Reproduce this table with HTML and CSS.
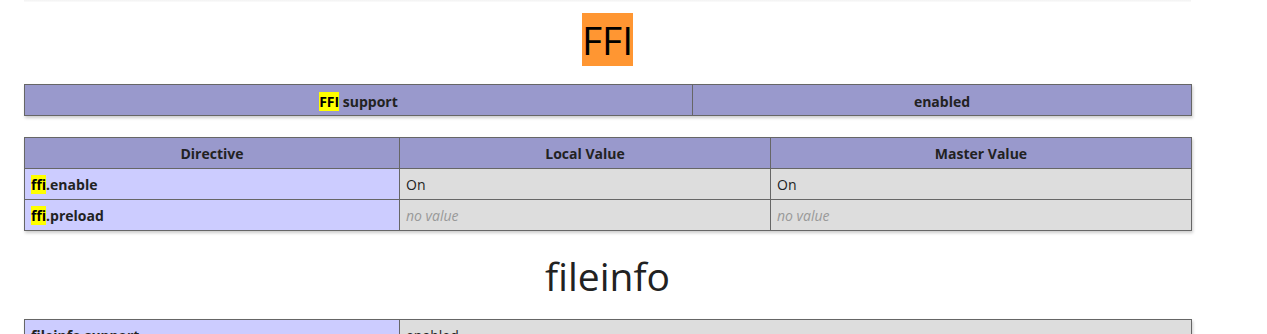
FILE: index.html
```html
<!DOCTYPE html>
<html>
<head>
<meta charset="utf-8">
<title>phpinfo()</title>
<link rel="stylesheet" href="styles.css">
</head>
<body>
<div class="center">
  <div class="prev-shadow"></div>
  <h2 class="first"><mark class="active">FFI</mark></h2>
  <table class="t1">
    <colgroup><col class="c668"><col class="c499"></colgroup>
    <tr class="h"><th><mark>FFI</mark> support</th><th>enabled</th></tr>
  </table>
  <table class="t2">
    <colgroup><col class="c375"><col class="c371"><col class="c421"></colgroup>
    <tr class="h"><th>Directive</th><th>Local Value</th><th>Master Value</th></tr>
    <tr><td class="e"><mark>ffi</mark>.enable</td><td class="v">On</td><td class="v">On</td></tr>
    <tr><td class="e"><mark>ffi</mark>.preload</td><td class="v"><i>no value</i></td><td class="v"><i>no value</i></td></tr>
  </table>
  <h2>fileinfo</h2>
  <table class="t3">
    <colgroup><col class="c375"><col class="c792"></colgroup>
    <tr><td class="e">fileinfo support </td><td class="v">enabled </td></tr>
    <tr><td class="e">libmagic </td><td class="v">540 </td></tr>
  </table>
</div>
</body>
</html>
```

FILE: styles.css
```css
html, body {
  margin: 0;
  padding: 0;
  background: #fff;
}
body {
  color: #222;
  font-family: "Open Sans", "Noto Sans", sans-serif;
}
.center {
  width: 1167px;
  margin-left: 24px;
  text-align: center;
}
.prev-shadow {
  height: 2px;
  background: linear-gradient(#f2f2f2, #fbfbfb);
}
h2 {
  font-size: 39px;
  font-weight: normal;
  line-height: 53px;
  margin: 18px 0 17px;
}
h2.first {
  margin: 11px 0 18px;
}
mark {
  background: #ffff00;
  color: #000;
}
mark.active {
  background: #ff9632;
  font-weight: 500;
}
table {
  border-collapse: collapse;
  table-layout: fixed;
  width: 1167px;
  box-shadow: 1px 2px 3px #ccc;
  text-align: left;
  margin: 0 0 21px;
}
.t2 {
  margin-bottom: 0;
}
.c668 { width: 668px; }
.c499 { width: 499px; }
.c375 { width: 375px; }
.c371 { width: 371px; }
.c421 { width: 421px; }
.c792 { width: 792px; }
td, th {
  border: 1px solid #666;
  font-size: 14px;
  line-height: 20px;
  padding: 6px 6px 4px;
  vertical-align: baseline;
}
.t1 th {
  padding: 7px 6px 3px;
}
th {
  font-weight: bold;
  text-align: center;
}
.h {
  background: #99c;
}
.e {
  background: #ccf;
  font-weight: bold;
}
.v {
  background: #ddd;
}
.v i {
  color: #999;
}
```
